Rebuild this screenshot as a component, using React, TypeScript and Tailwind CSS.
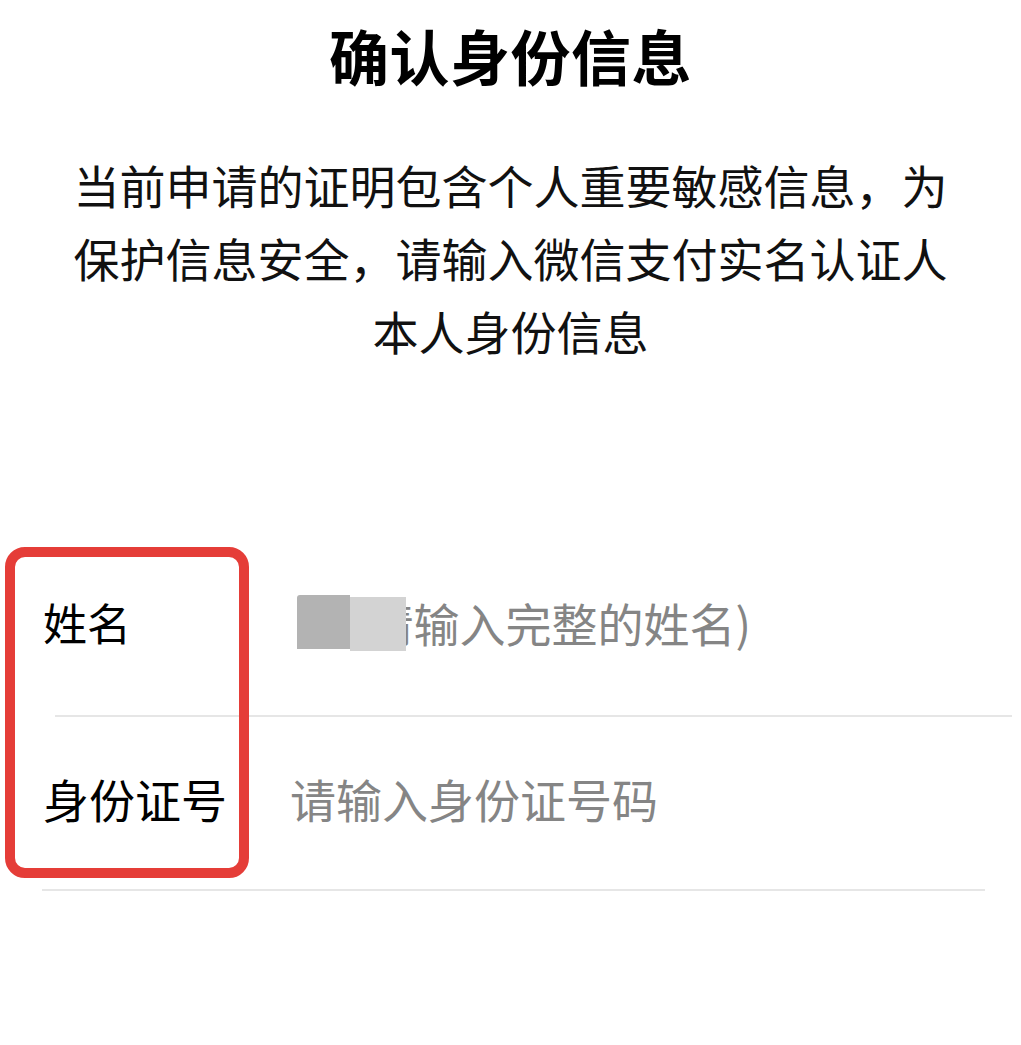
const font = { fontFamily: '"Noto Sans CJK SC", "Noto Sans", sans-serif' };

export default function App() {
  return (
    <div className="relative min-h-[1045px] w-full bg-white text-black" style={font}>
      <h1 className="pt-[20px] text-center text-[60px] font-bold leading-[70px] tracking-[0.5px]">
        确认身份信息
      </h1>

      <p className="mx-auto mt-[58px] w-[890px] text-center text-[46px] leading-[73px] text-[#111]">
        当前申请的证明包含个人重要敏感信息，为保护信息安全，请输入微信支付实名认证人本人身份信息
      </p>

      <div className="mt-[167px]">
        {/* name row */}
        <div className="flex h-[181px] items-center pb-[6px]">
          <div className="w-[290px] shrink-0 pl-[43px] text-[44px] leading-none">姓名</div>
          <div className="relative pl-[62px] text-[46px] leading-none text-[#858585]">
            (请输入完整的姓名)
            <span className="absolute left-[7px] top-[-4px] h-[54px] w-[53px] rounded-tl-[3px] bg-[#b3b3b3]" />
            <span className="absolute left-[60px] top-[-2px] h-[54px] w-[56px] bg-[#d3d3d3]" />
          </div>
        </div>
        <div className="ml-[55px] mr-[9px] h-[2px] bg-[#e6e6e6]" />

        {/* id row */}
        <div className="flex h-[172px] items-center pb-[10px]">
          <div className="w-[290px] shrink-0 pl-[43px] text-[46px] leading-none">身份证号</div>
          <div className="text-[46px] leading-none text-[#858585]">请输入身份证号码</div>
        </div>
        <div className="ml-[42px] mr-[36px] h-[2px] bg-[#e6e6e6]" />
      </div>

      {/* highlight annotation */}
      <div className="absolute left-[5px] top-[547px] h-[331px] w-[244px] rounded-[20px] border-[10px] border-[#e53d38]" />
    </div>
  );
}
